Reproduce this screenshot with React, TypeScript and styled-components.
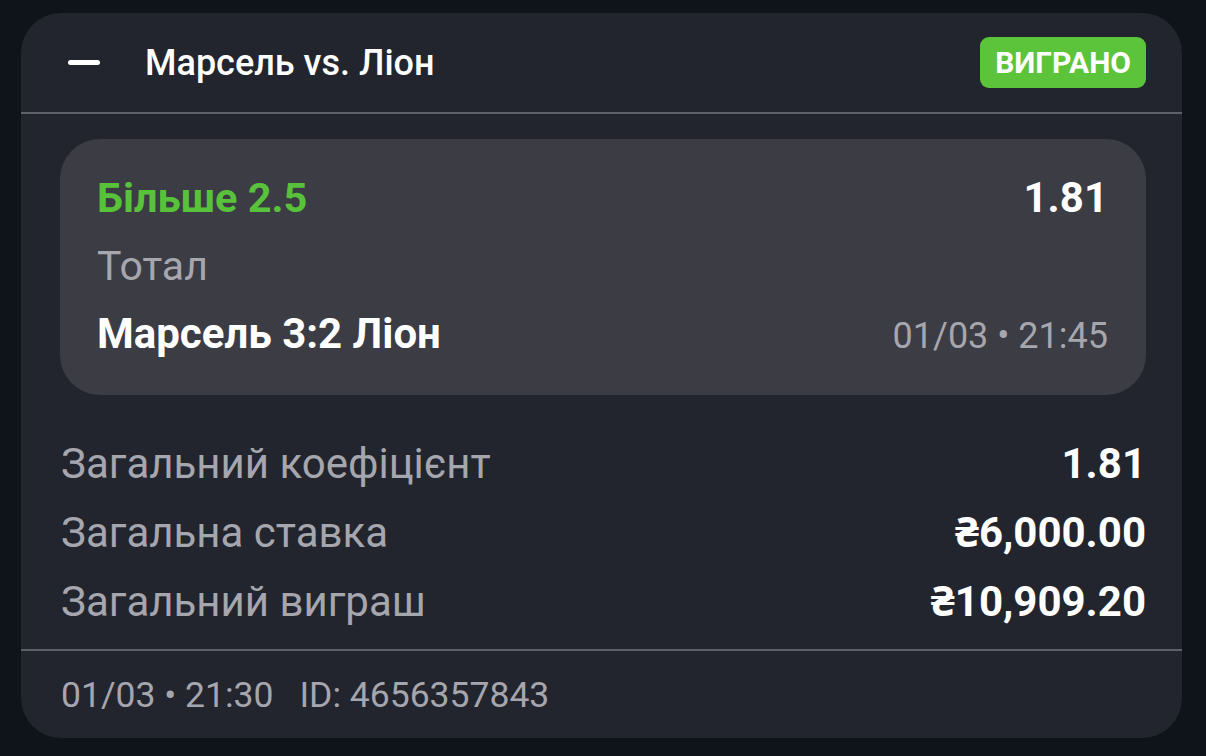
import styled, { createGlobalStyle } from 'styled-components'

const GlobalStyle = createGlobalStyle`
  html, body {
    margin: 0;
    background: #0f141b;
    font-family: Roboto, 'Noto Sans', sans-serif;
    -webkit-font-smoothing: antialiased;
  }
`

const summary = [
  { label: 'Загальний коефіцієнт', value: '1.81' },
  { label: 'Загальна ставка', value: '₴6,000.00' },
  { label: 'Загальний виграш', value: '₴10,909.20' },
]

export default function App() {
  return (
    <Page>
      <GlobalStyle />
      <Card>
        <Header>
          <Collapse />
          <Title>Марсель vs. Ліон</Title>
          <Badge>ВИГРАНО</Badge>
        </Header>

        <Body>
          <Selection>
            <Line>
              <Pick>Більше 2.5</Pick>
              <Odds>1.81</Odds>
            </Line>
            <Line>
              <Market>Тотал</Market>
            </Line>
            <Line>
              <Score>Марсель 3:2 Ліон</Score>
              <EventTime>01/03 • 21:45</EventTime>
            </Line>
          </Selection>

          <Summary>
            {summary.map((row) => (
              <SummaryRow key={row.label}>
                <SummaryLabel>{row.label}</SummaryLabel>
                <SummaryValue>{row.value}</SummaryValue>
              </SummaryRow>
            ))}
          </Summary>
        </Body>

        <Footer>
          <span>01/03 • 21:30</span>
          <span>ID: 4656357843</span>
        </Footer>
      </Card>
    </Page>
  )
}

const Page = styled.div`
  padding: 13px 24px 18px 21px;
`

const Card = styled.div`
  background: #22252d;
  border-radius: 40px;
  overflow: hidden;
`

const Header = styled.div`
  height: 99px;
  display: flex;
  align-items: center;
  padding: 0 36px 0 47px;
  border-bottom: 2px solid #5e6068;
`

const Collapse = styled.span`
  width: 32px;
  height: 5px;
  border-radius: 3px;
  background: #ffffff;
  margin-right: 45px;
`

const Title = styled.div`
  flex: 1;
  color: #ffffff;
  font-size: 36px;
  font-weight: 500;
`

const Badge = styled.div`
  background: #5cc43a;
  color: #ffffff;
  font-size: 30px;
  font-weight: 700;
  height: 51px;
  padding: 0 15px;
  border-radius: 9px;
  display: flex;
  align-items: center;
`

const Body = styled.div`
  padding: 25px 36px 0 39px;
`

const Selection = styled.div`
  background: #3c3c44;
  border-radius: 40px;
  padding: 25px 38px 27px 37px;
`

const Line = styled.div`
  display: flex;
  justify-content: space-between;
  align-items: baseline;
  height: 68px;
  line-height: 68px;
`

const Pick = styled.span`
  color: #57c23a;
  font-size: 41.5px;
  font-weight: 700;
`

const Odds = styled.span`
  color: #ffffff;
  font-size: 42px;
  font-weight: 700;
`

const Market = styled.span`
  color: #a6a6ae;
  font-size: 41px;
`

const Score = styled.span`
  color: #ffffff;
  font-size: 42px;
  font-weight: 700;
`

const EventTime = styled.span`
  color: #a6a6ae;
  font-size: 36px;
`

const Summary = styled.div`
  padding: 34px 0 13px;
`

const SummaryRow = styled.div`
  display: flex;
  justify-content: space-between;
  align-items: baseline;
  height: 69px;
  line-height: 69px;
  padding-left: 1px;
`

const SummaryLabel = styled.span`
  color: #a6a6ae;
  font-size: 42px;
`

const SummaryValue = styled.span`
  color: #ffffff;
  font-size: 42px;
  font-weight: 700;
`

const Footer = styled.div`
  border-top: 2px solid #5e6068;
  height: 87px;
  display: flex;
  align-items: center;
  gap: 26px;
  padding-left: 40px;
  color: #a6a6ae;
  font-size: 35.5px;
`
